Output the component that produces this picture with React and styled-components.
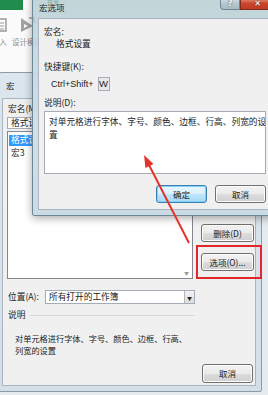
import React from 'react';
import styled, { createGlobalStyle } from 'styled-components';

const GlobalStyle = createGlobalStyle`
  html, body { margin: 0; padding: 0; background: #fff; }
  body { font-family: "Noto Sans CJK SC", "Liberation Sans", sans-serif; }
`;

const Screen = styled.div`
  position: relative;
  width: 268px;
  height: 395px;
  overflow: hidden;
  background: #e6ebef;
  font-size: 8.7px;
  line-height: 1;
  color: #1b1b1b;
  white-space: nowrap;
`;

// excel ribbon behind the dialogs
const Ribbon = styled.div`
  height: 72px;
  background: #fbfbfb;
  border-bottom: 1px solid #d6d6d6;
  display: flex;
  flex-direction: column;
`;

const TabStrip = styled.div`
  height: 10px;
  display: flex;
  align-items: flex-start;
  background: #fff;
`;

const FileTab = styled.div`
  width: 23px;
  height: 10px;
  background: #1f8c4b;
`;

const TabLabel = styled.span`
  margin-left: 24px;
  font-size: 6px;
  color: #4f8a66;
`;

const ToolRow = styled.div`
  display: flex;
  gap: 4px;
  padding-top: 6px;
`;

const Tool = styled.div`
  display: flex;
  flex-direction: column;
  align-items: center;
  gap: 4px;
  width: ${p => p.$w}px;
  margin-left: ${p => p.$ml || 0}px;
  color: #8a8a8a;
  font-size: 7.5px;
`;

const Window = styled.div`
  position: absolute;
  left: ${p => p.$x}px;
  top: ${p => p.$y}px;
  width: ${p => p.$w}px;
  height: ${p => p.$h}px;
  border: 1px solid ${p => p.$edge};
  border-radius: 6px 6px 2px 2px;
  background: ${p => p.$frame};
  box-shadow: ${p => p.$shadow || 'none'};
  display: flex;
  flex-direction: column;
  padding: 0 5px 5px;
  box-sizing: border-box;
`;

const TitleBar = styled.div`
  height: ${p => p.$h}px;
  display: flex;
  align-items: center;
  justify-content: space-between;
  padding-left: ${p => p.$pl}px;
  font-size: 8.5px;
  color: #222;
`;

const Caption = styled.div`
  display: flex;
  align-self: flex-start;
  margin-top: 7px;
  margin-right: -4px;
`;

const CapButton = styled.div`
  width: ${p => p.$w}px;
  height: 11px;
  display: flex;
  align-items: center;
  justify-content: center;
  border: 1px solid ${p => (p.$close ? '#7e2f23' : '#6f8590')};
  border-top: none;
  border-radius: ${p => (p.$close ? '0 0 4px 0' : '0 0 0 4px')};
  background: ${p =>
    p.$close
      ? 'linear-gradient(#e49a86, #c8452c 50%, #c23a20)'
      : 'linear-gradient(#dbe5ea, #b5c7cf 50%, #a8bcc5)'};
  color: #fff;
  font-family: "DejaVu Sans", sans-serif;
  font-size: 8px;
  font-weight: bold;
  text-shadow: 0 0 2px #333;
`;

const Client = styled.div`
  flex: 1;
  background: #f0f0f0;
  border: 1px solid #a9b6c1;
  display: flex;
  flex-direction: column;
`;

const Label = styled.div`
  height: 11px;
  display: flex;
  align-items: center;
  margin-left: ${p => p.$ml || 0}px;
  margin-top: ${p => p.$mt || 0}px;
`;

const MainRow = styled.div`
  display: flex;
  gap: 8px;
  padding-left: 4px;
`;

const LeftCol = styled.div`
  width: 186px;
  display: flex;
  flex-direction: column;
`;

const RightCol = styled.div`
  width: 54px;
  display: flex;
  flex-direction: column;
  justify-content: flex-end;
  gap: 11px;
  padding-bottom: 8px;
`;

const Field = styled.div`
  height: ${p => p.$h}px;
  margin-top: 2px;
  background: #fff;
  border: 1px solid #a5acb5;
  box-sizing: border-box;
  display: flex;
  align-items: center;
  padding-left: 3px;
`;

const ListBox = styled.div`
  position: relative;
  height: 148px;
  margin-top: 2px;
  background: #fff;
  border: 1px solid #828790;
  box-sizing: border-box;
  padding: 3px 1px;
`;

const ListItem = styled.div`
  height: 11px;
  display: flex;
  align-items: center;
  padding-left: 2px;
  margin-bottom: 2px;
  background: ${p => (p.$selected ? '#3399ff' : 'transparent')};
  color: ${p => (p.$selected ? '#fff' : '#1b1b1b')};
`;

const ScrollArrow = styled.span`
  position: absolute;
  right: 3px;
  bottom: 3px;
  font-size: 5px;
  color: #9a9a9a;
`;

const Button = styled.div`
  width: ${p => p.$w}px;
  height: ${p => p.$h || 18}px;
  box-sizing: border-box;
  display: flex;
  align-items: center;
  justify-content: center;
  border: 1px solid ${p => (p.$focused ? '#3c7fb1' : '#707070')};
  border-radius: 3px;
  background: ${p =>
    p.$focused
      ? 'linear-gradient(#eaf6fd, #d9f0fc 50%, #bee6fd 51%, #a7d9f5)'
      : 'linear-gradient(#f2f2f2, #ebebeb 50%, #dddddd 51%, #cfcfcf)'};
  box-shadow: inset 0 0 0 1px ${p => (p.$focused ? '#7fd3f5' : '#fcfcfc')};
  font-size: 8.5px;
`;

const PlaceRow = styled.div`
  display: flex;
  align-items: center;
  margin-top: 11px;
  padding-left: 5px;
`;

const Select = styled.div`
  width: 150px;
  height: 14px;
  margin-left: 6px;
  background: #fff;
  border: 1px solid #a5acb5;
  box-sizing: border-box;
  display: flex;
  align-items: center;
  justify-content: space-between;
  padding-left: 3px;
`;

const DropButton = styled.div`
  width: 9px;
  height: 12px;
  display: flex;
  align-items: center;
  justify-content: center;
  background: linear-gradient(#f4f4f4, #dcdcdc);
  border-left: 1px solid #b5b5b5;
  font-size: 5px;
  color: #222;
`;

const Group = styled.div`
  display: flex;
  align-items: center;
  gap: 4px;
  margin-top: 7px;
  padding-left: 5px;
  width: 187px;
`;

const Rule = styled.div`
  flex: 1;
  height: 1px;
  background: #d5dadf;
`;

const Desc = styled.div`
  margin-top: 12px;
  padding-left: 12px;
  line-height: 12px;
  font-size: 8.2px;
`;

const Footer = styled.div`
  display: flex;
  justify-content: flex-end;
  padding-right: 2px;
  margin-top: auto;
  margin-bottom: 2px;
`;

const Shortcut = styled.div`
  display: flex;
  align-items: center;
  gap: 4px;
  margin-top: 4px;
  margin-left: 12px;
  font-family: "Liberation Sans", sans-serif;
  font-size: 9px;
`;

const KeyBox = styled.div`
  width: 12px;
  height: 14px;
  box-sizing: border-box;
  border: 1px solid #a5acb5;
  background: #e9e9e9;
  display: flex;
  align-items: center;
  justify-content: center;
  font-size: 9.5px;
`;

const TextArea = styled.div`
  height: 63px;
  margin: 2px 4px 0 5px;
  background: #fff;
  border: 1px solid #a5acb5;
  box-sizing: border-box;
  padding: 4px 4px;
  line-height: 12.5px;
  overflow: hidden;
`;

const DialogButtons = styled.div`
  display: flex;
  justify-content: flex-end;
  gap: 8px;
  margin: 11px 4px 0 0;
`;

const Overlay = styled.svg`
  position: absolute;
  left: 0;
  top: 0;
  pointer-events: none;
`;

const Highlight = styled.div`
  position: absolute;
  left: 196px;
  top: 245px;
  width: 66px;
  height: 34px;
  box-sizing: border-box;
  border: 2px solid #e2262b;
`;

const InsertIcon = () => (
  <svg width="12" height="18" viewBox="0 0 12 18">
    <rect x="0" y="3" width="9" height="12" fill="none" stroke="#9a9a9a" strokeWidth="1.5" />
    <path d="M2 7h5M2 10h5M2 13h5" stroke="#9a9a9a" />
  </svg>
);

const DesignIcon = () => (
  <svg width="16" height="18" viewBox="0 0 16 18">
    <path d="M2 2 L14 10 L2 16 Z" fill="#a3a3a3" />
    <path d="M5 8 L9 10 L5 12 Z" fill="#fbfbfb" />
    <path d="M10 2 L15 2 L15 7" fill="none" stroke="#a3a3a3" strokeWidth="1.5" />
  </svg>
);

const App = () => {
  return (
    <>
      <GlobalStyle />
      <Screen>
        <Ribbon>
          <TabStrip>
            <FileTab />
            <TabLabel>开发</TabLabel>
          </TabStrip>
          <ToolRow>
            <Tool $w={10} $ml={-2}>
              <InsertIcon />
              <span>入</span>
            </Tool>
            <Tool $w={22} $ml={4}>
              <DesignIcon />
              <span>设计模式</span>
            </Tool>
          </ToolRow>
        </Ribbon>

        {/* 宏 dialog */}
        <Window $x={-4} $y={72} $w={266} $h={320} $edge="#8c9ba8" $frame="linear-gradient(#dce6ee, #d3dee8)">
          <TitleBar $h={25} $pl={4}>宏</TitleBar>
          <Client>
            <Label $ml={5} $mt={5}>宏名(M):</Label>
            <MainRow>
              <LeftCol>
                <Field $h={12}>格式设置</Field>
                <ListBox>
                  <ListItem $selected>格式设置</ListItem>
                  <ListItem>宏3</ListItem>
                  <ScrollArrow>▼</ScrollArrow>
                </ListBox>
              </LeftCol>
              <RightCol>
                <Button $w={53}>删除(D)</Button>
                <Button $w={53}>选项(O)...</Button>
              </RightCol>
            </MainRow>
            <PlaceRow>
              <span>位置(A):</span>
              <Select>
                <span>所有打开的工作簿</span>
                <DropButton>▼</DropButton>
              </Select>
            </PlaceRow>
            <Group>
              <span>说明</span>
              <Rule />
            </Group>
            <Desc>
              对单元格进行字体、字号、颜色、边框、行高、
              <br />
              列宽的设置
            </Desc>
            <Footer>
              <Button $w={51} $h={19}>取消</Button>
            </Footer>
          </Client>
        </Window>

        {/* 宏选项 dialog, aero glass frame lets the ribbon show through */}
        <Window
          $x={32}
          $y={-10}
          $w={245}
          $h={226}
          $edge="#6d8796"
          $frame="linear-gradient(rgba(140,178,180,0.55) 0%, rgba(190,210,218,0.85) 18%, #d2e0e8 60%, #cadbe6)"
          $shadow="0 2px 8px rgba(0,0,0,0.35)"
        >
          <TitleBar $h={27} $pl={1}>
            <span style={{ marginTop: 6 }}>宏选项</span>
            <Caption>
              <CapButton $w={18}>?</CapButton>
              <CapButton $w={33} $close>✕</CapButton>
            </Caption>
          </TitleBar>
          <Client>
            <Label $ml={5} $mt={8}>宏名:</Label>
            <Label $ml={17} $mt={1}>格式设置</Label>
            <Label $ml={5} $mt={12}>快捷键(K):</Label>
            <Shortcut>
              <span>Ctrl+Shift+</span>
              <KeyBox>W</KeyBox>
            </Shortcut>
            <Label $ml={5} $mt={7}>说明(D):</Label>
            <TextArea>
              对单元格进行字体、字号、颜色、边框、行高、列宽的设
              <br />
              置
            </TextArea>
            <DialogButtons>
              <Button $w={51} $focused>确定</Button>
              <Button $w={51}>取消</Button>
            </DialogButtons>
          </Client>
        </Window>

        <Overlay width="268" height="395" viewBox="0 0 268 395">
          <line x1="189" y1="243" x2="148" y2="163" stroke="#e5332a" strokeWidth="2" />
          <polygon points="144,155 153.5,164 145.5,168" fill="#e5332a" />
        </Overlay>
        <Highlight />
      </Screen>
    </>
  );
};

export default App;
